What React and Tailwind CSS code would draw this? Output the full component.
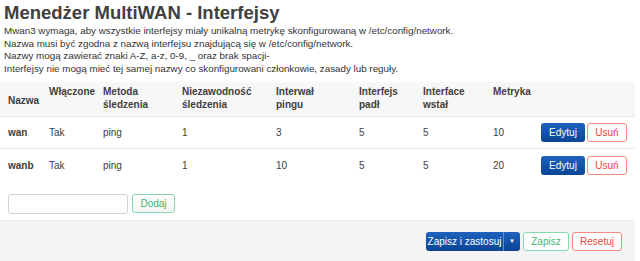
import React from "react";

const cols = [
  { label: ["Nazwa"], w: "w-[41px]" },
  { label: ["Włączone"], w: "w-[54px]" },
  { label: ["Metoda", "śledzenia"], w: "w-[79px]" },
  { label: ["Niezawodność", "śledzenia"], w: "w-[94px]" },
  { label: ["Interwał", "pingu"], w: "w-[83px]" },
  { label: ["Interfejs", "padł"], w: "w-[64px]" },
  { label: ["Interface", "wstał"], w: "w-[70px]" },
  { label: ["Metryka"], w: "w-[48px]" },
];

const rows = [
  ["wan", "Tak", "ping", "1", "3", "5", "5", "10"],
  ["wanb", "Tak", "ping", "1", "10", "5", "5", "20"],
];

function App() {
  return (
    <div className="w-[635px] bg-white text-[#404040] font-['Liberation_Sans',Arial,sans-serif]">
      <div className="px-[4px] pt-[1px]">
        <h2 className="text-[18.5px] font-bold leading-[23px] text-[#404040]">Menedżer MultiWAN - Interfejsy</h2>
        <div className="mt-[1px] text-[9.8px] leading-[12.5px] text-[#333]">
          <p>Mwan3 wymaga, aby wszystkie interfejsy miały unikalną metrykę skonfigurowaną w /etc/config/network.</p>
          <p>Nazwa musi być zgodna z nazwą interfejsu znajdującą się w /etc/config/network.</p>
          <p>Nazwy mogą zawierać znaki A-Z, a-z, 0-9, _ oraz brak spacji-</p>
          <p>Interfejsy nie mogą mieć tej samej nazwy co skonfigurowani członkowie, zasady lub reguły.</p>
        </div>
      </div>

      <div className="mt-[7px] text-[10px]">
        <div className="flex h-[35px] bg-[#f7f7f7] border-b border-[#e6e6e6] px-[8px] font-bold leading-[13px]">
          {cols.map((c, i) => (
            <div key={i} className={`${c.w} ${i === 0 ? "pt-[12px]" : "pt-[3px]"}`}>
              {c.label.map((l) => (
                <div key={l}>{l}</div>
              ))}
            </div>
          ))}
        </div>
        {rows.map((r, ri) => (
          <div key={ri} className={`flex h-[32px] items-center px-[8px] ${ri === 0 ? "border-b border-[#e6e6e6]" : ""}`}>
            {r.map((v, i) => (
              <div key={i} className={`${cols[i].w} ${i === 0 ? "font-bold" : ""}`}>{v}</div>
            ))}
            <div className="flex gap-[2px]">
              <button className="w-[44px] h-[19px] rounded-[3px] bg-gradient-to-b from-[#1d62bd] to-[#0a4596] text-white text-[10px]">Edytuj</button>
              <button className="w-[40px] h-[19px] rounded-[3px] border border-[#f38a7e] bg-white text-[#e8473a] text-[10px]">Usuń</button>
            </div>
          </div>
        ))}
      </div>

      <div className="flex items-center gap-[4px] px-[8px] mt-[12px] h-[21px]">
        <input className="w-[120px] h-[20px] rounded-[3px] border border-[#d5d5d5] bg-white outline-none" />
        <button className="w-[43px] h-[19px] rounded-[3px] border border-[#86d9ab] bg-gradient-to-b from-white to-[#f3f3f3] text-[#3fb56f] text-[10px]">Dodaj</button>
      </div>

      <div className="mt-[6px] h-[42px] bg-[#f4f4f4] border-t border-[#ececec] flex items-center justify-end pr-[13px] gap-[3px] text-[10px]">
        <div className="flex h-[19px] rounded-[3px] overflow-hidden bg-gradient-to-b from-[#1d62bd] to-[#0a4596] text-white">
          <span className="w-[78px] flex items-center justify-center border-r border-[#5b8fd4]">Zapisz i zastosuj</span>
          <span className="w-[16px] flex items-center justify-center text-[6px]">▼</span>
        </div>
        <button className="w-[46px] h-[19px] rounded-[3px] border border-[#86d9ab] bg-white text-[#3fb56f]">Zapisz</button>
        <button className="w-[50px] h-[19px] rounded-[3px] border border-[#f38a7e] bg-white text-[#e8473a]">Resetuj</button>
      </div>
    </div>
  );
}

export default App;
